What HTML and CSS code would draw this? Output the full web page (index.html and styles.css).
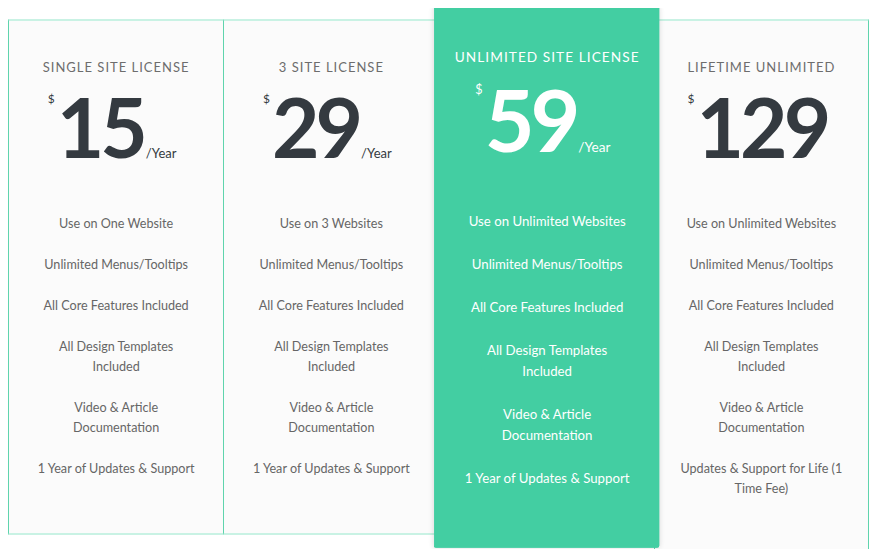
FILE: index.html
```html
<!DOCTYPE html>
<html lang="en">

<head>
    <meta charset="UTF-8">
    <meta name="viewport" content="width=device-width, initial-scale=1.0">
    <title>Pricing</title>
    <link rel="stylesheet" href="styles.css">
</head>

<body>
    <div class="pricing">
        <div class="plan">
            <h3 class="plan-name">Single Site License</h3>
            <div class="price"><span class="currency">$</span><span class="amount">15</span><span class="period">/Year</span></div>
            <ul class="features">
                <li>Use on One Website</li>
                <li>Unlimited Menus/Tooltips</li>
                <li>All Core Features Included</li>
                <li>All Design Templates Included</li>
                <li>Video &amp; Article Documentation</li>
                <li>1 Year of Updates &amp; Support</li>
            </ul>
        </div>

        <div class="plan">
            <h3 class="plan-name">3 Site License</h3>
            <div class="price"><span class="currency">$</span><span class="amount">29</span><span class="period">/Year</span></div>
            <ul class="features">
                <li>Use on 3 Websites</li>
                <li>Unlimited Menus/Tooltips</li>
                <li>All Core Features Included</li>
                <li>All Design Templates Included</li>
                <li>Video &amp; Article Documentation</li>
                <li>1 Year of Updates &amp; Support</li>
            </ul>
        </div>

        <div class="plan featured">
            <h3 class="plan-name">Unlimited Site License</h3>
            <div class="price"><span class="currency">$</span><span class="amount">59</span><span class="period">/Year</span></div>
            <ul class="features">
                <li>Use on Unlimited Websites</li>
                <li>Unlimited Menus/Tooltips</li>
                <li>All Core Features Included</li>
                <li>All Design Templates Included</li>
                <li>Video &amp; Article Documentation</li>
                <li>1 Year of Updates &amp; Support</li>
            </ul>
        </div>

        <div class="plan">
            <h3 class="plan-name">Lifetime Unlimited</h3>
            <div class="price"><span class="currency">$</span><span class="amount">129</span></div>
            <ul class="features">
                <li>Use on Unlimited Websites</li>
                <li>Unlimited Menus/Tooltips</li>
                <li>All Core Features Included</li>
                <li>All Design Templates Included</li>
                <li>Video &amp; Article Documentation</li>
                <li>Updates &amp; Support for Life (1 Time Fee)</li>
            </ul>
        </div>
    </div>
</body>

</html>
```

FILE: styles.css
```css
body {
    font-family: Lato, "Open Sans", sans-serif;
    background-color: #fff;
    margin: 8px;
}

.pricing {
    display: flex;
    align-items: flex-start;
    width: 861px;
    padding-top: 11px;
}

.plan {
    flex: none;
    width: 25%;
    box-sizing: border-box;
    background-color: #fbfbfb;
    border-top: 2px solid #c9f2e4;
    border-bottom: 2px solid #c9f2e4;
    border-left: 1px solid #5fd4ad;
    padding: 36px 25px 54px;
    text-align: center;
}

.plan:last-child {
    border-right: 1px solid #5fd4ad;
}

.plan-name {
    margin: 0 -20px;
    font-size: 13px;
    font-weight: 400;
    line-height: 20px;
    letter-spacing: 1px;
    white-space: nowrap;
    text-transform: uppercase;
    color: #6d6d6d;
}

.price {
    margin: 7px 8px 46px 0;
    font-size: 82px;
    line-height: 84px;
    white-space: nowrap;
    color: #343a40;
}

.currency {
    display: inline-block;
    vertical-align: top;
    margin-top: 9px;
    margin-right: 2px;
    font-size: 12px;
    line-height: 12px;
}

.amount {
    font-weight: 700;
    letter-spacing: -4px;
}

.period {
    margin-left: 2px;
    font-size: 13px;
    line-height: 13px;
}

.features {
    list-style: none;
    margin: 0;
    padding: 0;
}

.features li {
    font-size: 12.6px;
    line-height: 20px;
    color: #666;
    margin-bottom: 21px;
}

.features li:last-child {
    margin-bottom: 0;
}

.featured {
    position: relative;
    z-index: 1;
    background-color: #43cea2;
    border-color: #43cea2;
    border-radius: 2px;
    box-shadow: 0 0 5px rgba(0, 0, 0, 0.12);
    transform: scale(1.05);
}

.featured .plan-name,
.featured .price,
.featured .features li {
    color: #fff;
}
```
